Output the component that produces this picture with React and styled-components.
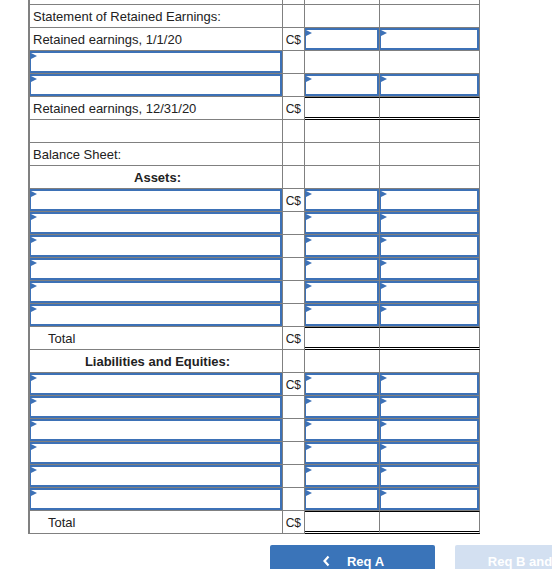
import React from "react";
import styled, { createGlobalStyle } from "styled-components";

const GlobalStyle = createGlobalStyle`
  html, body {
    margin: 0;
    padding: 0;
    background: #fff;
    overflow: hidden;
  }
  body {
    font-family: "Liberation Sans", Arial, sans-serif;
    color: #222;
  }
`;

const blue = "#3d71b6";
const grid = "#808080";

// each row: label, kind of label, currency?, what the two amount columns hold
const rows = [
  { label: "", kind: "text" },
  { label: "Statement of Retained Earnings:", kind: "text" },
  { label: "Retained earnings, 1/1/20", kind: "text", cur: true, amounts: "input" },
  { kind: "input" },
  { kind: "input", amounts: "input" },
  { label: "Retained earnings, 12/31/20", kind: "text", cur: true, amounts: "total" },
  { label: "", kind: "text" },
  { label: "Balance Sheet:", kind: "text" },
  { label: "Assets:", kind: "heading" },
  { kind: "input", cur: true, amounts: "input" },
  { kind: "input", amounts: "input" },
  { kind: "input", amounts: "input" },
  { kind: "input", amounts: "input" },
  { kind: "input", amounts: "input" },
  { kind: "input", amounts: "input" },
  { label: "Total", kind: "total", cur: true, amounts: "total" },
  { label: "Liabilities and Equities:", kind: "heading" },
  { kind: "input", cur: true, amounts: "input" },
  { kind: "input", amounts: "input" },
  { kind: "input", amounts: "input" },
  { kind: "input", amounts: "input" },
  { kind: "input", amounts: "input" },
  { kind: "input", amounts: "input" },
  { label: "Total", kind: "total", cur: true, amounts: "total" },
];

const labelPadding = { total: "18px", input: "0", text: "3px", heading: "3px" };

const AmountCells = ({ type }) => {
  if (type === "input") {
    return (
      <>
        <AmountCell>
          <Field><FieldInput readOnly /></Field>
        </AmountCell>
        <AmountCell>
          <Field><FieldInput readOnly /></Field>
        </AmountCell>
      </>
    );
  }
  if (type === "total") {
    return (
      <>
        <AmountCell $total />
        <AmountCell $total />
      </>
    );
  }
  return (
    <>
      <AmountCell />
      <AmountCell />
    </>
  );
};

export default function App() {
  return (
    <Page>
      <GlobalStyle />
      <Sheet>
        <colgroup>
          <col style={{ width: 255 }} />
          <col style={{ width: 22 }} />
          <col style={{ width: 75 }} />
          <col style={{ width: 100 }} />
        </colgroup>
        <tbody>
          {rows.map((r, i) => (
            <tr key={i}>
              {r.kind === "input" ? (
                <LabelCell $kind="input">
                  <Field><FieldInput readOnly /></Field>
                </LabelCell>
              ) : (
                <LabelCell $kind={r.kind}>{r.label}</LabelCell>
              )}
              <CurCell>{r.cur ? "C$" : ""}</CurCell>
              <AmountCells type={r.amounts} />
            </tr>
          ))}
        </tbody>
      </Sheet>
      <ButtonBar>
        <NavButton>
          <svg width="7" height="12" viewBox="0 0 7 12">
            <path d="M5.5 1.5 L1.5 6 L5.5 10.5" fill="none" stroke="#fff" strokeWidth="2.2" />
          </svg>
          Req A
        </NavButton>
        <NavButton $disabled>
          Req B and C
          <svg width="7" height="12" viewBox="0 0 7 12">
            <path d="M1.5 1.5 L5.5 6 L1.5 10.5" fill="none" stroke="#fff" strokeWidth="2.2" />
          </svg>
        </NavButton>
      </ButtonBar>
    </Page>
  );
}

const Page = styled.div`
  padding-left: 28px;
  width: 524px;
`;

const Sheet = styled.table`
  margin-top: -18px;
  border-collapse: separate;
  border-spacing: 0;
  table-layout: fixed;
  width: 452px;
  font-size: 13px;

  td {
    height: 22px;
    padding: 0;
    border-right: 1px solid ${grid};
    border-bottom: 1px solid ${grid};
    vertical-align: middle;
    white-space: nowrap;
    overflow: hidden;
  }
`;

const LabelCell = styled.td`
  && {
    border-left: 2px solid ${grid};
    padding-left: ${({ $kind }) => labelPadding[$kind] || "3px"};
    padding-top: 1px;
    height: 21px;
  }
  text-align: ${({ $kind }) => ($kind === "heading" ? "center" : "left")};
  font-weight: ${({ $kind }) => ($kind === "heading" ? "bold" : "normal")};
`;

const CurCell = styled.td`
  && {
    padding: 1px 3px 0 0;
    height: 21px;
  }
  text-align: right;
  font-size: 12px;
`;

const AmountCell = styled.td`
  && {
    ${({ $total }) =>
      $total &&
      `
      height: 18px;
      border-top: 1px solid #000;
      border-bottom: 3px double #000;
    `}
  }
`;

const Field = styled.span`
  position: relative;
  display: block;
  margin-top: -1px;

  &::before {
    content: "";
    position: absolute;
    top: 2px;
    left: 1px;
    border-left: 6px solid ${blue};
    border-top: 3.5px solid transparent;
    border-bottom: 3.5px solid transparent;
  }
`;

const FieldInput = styled.input`
  display: block;
  box-sizing: border-box;
  width: 100%;
  height: 22px;
  margin: 0;
  padding: 0 4px;
  border: 2px solid ${blue};
  border-width: 2px 2px 2px 1px;
  background: #fff;
  font: inherit;
  outline: none;
`;

const ButtonBar = styled.div`
  display: flex;
  gap: 20px;
  margin: 11px 0 0 242px;
`;

const NavButton = styled.button`
  flex: 0 0 165px;
  height: 32px;
  display: flex;
  align-items: center;
  justify-content: center;
  gap: 17px;
  border: none;
  border-radius: 2px;
  background: ${({ $disabled }) => ($disabled ? "#d3e0f1" : "#3a74b9")};
  color: #fff;
  font-family: "Liberation Sans", Arial, sans-serif;
  font-size: 13px;
  font-weight: bold;
  padding: 0 0 0 2px;
`;
